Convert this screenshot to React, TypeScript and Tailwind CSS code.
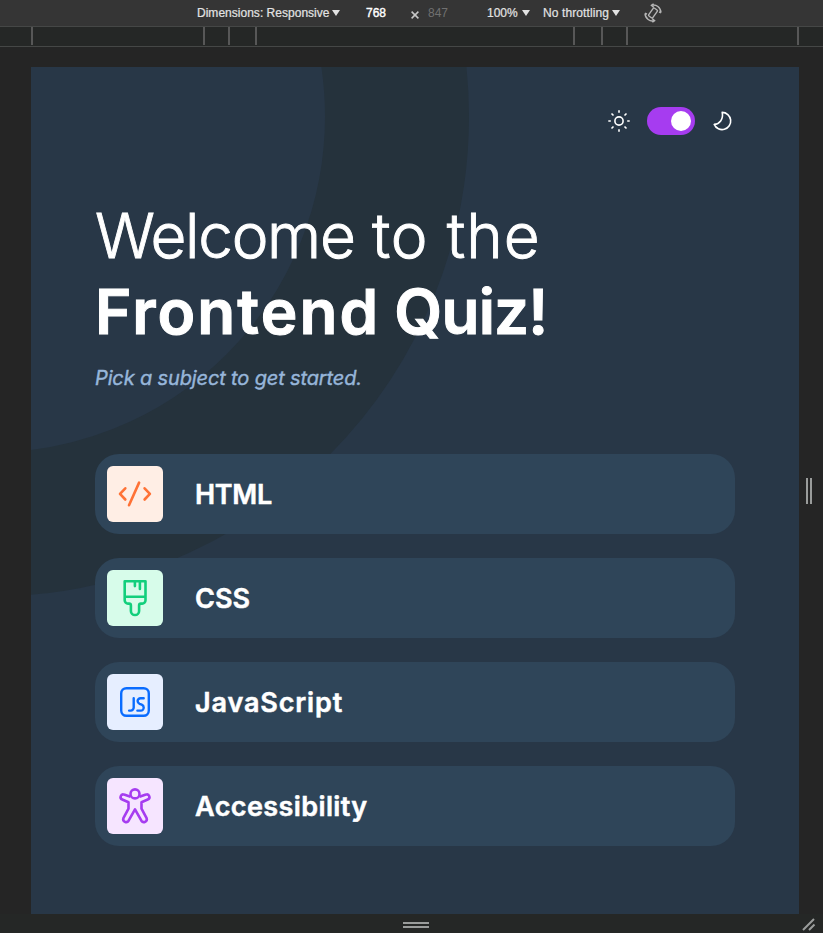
import type { ReactNode } from "react";

function Caret() {
  return (
    <svg className="ml-[3px] h-[6px] w-[8px]" viewBox="0 0 8 6">
      <path d="M0 0h8L4 6z" fill="#e3e3e3" />
    </svg>
  );
}

function RotateIcon() {
  return (
    <svg className="ml-[23px] h-[20px] w-[20px]" viewBox="0 0 20 20" fill="none" stroke="#b5b5b5" strokeWidth="1.4">
      <rect x="7.5" y="5.2" width="5" height="9.6" rx="1" transform="rotate(36 10 10)" />
      <path d="M8.6 2.4C13 .9 17.8 4.4 18 9.6M10.6 .8L8.4 2.4l2.4 2M16 8.8l2 1" />
      <path d="M11.4 17.6C7 19.1 2.2 15.6 2 10.4M9.4 19.2l2.2-1.6-2.4-2M4 11.2l-2-1" />
    </svg>
  );
}

function Toolbar() {
  return (
    <div className="flex h-[27px] items-center border-b border-[#454746] bg-[#353535] pl-[197px] text-[12px] text-[#e3e3e3] [-webkit-text-stroke:0.2px_#e3e3e3]">
      <span className="w-[132px] whitespace-nowrap tracking-[0.02px]">Dimensions: Responsive</span>
      <Caret />
      <span className="ml-[26px] w-[49px] text-white [-webkit-text-stroke:0.4px_white]">768</span>
      <svg className="mt-[3px] -ml-[4px] h-[8px] w-[8px]" viewBox="0 0 8 8" stroke="#c7c7c7" strokeWidth="1.5">
        <path d="M.6.6l6.8 6.8M7.4.6L.6 7.4" />
      </svg>
      <span className="ml-[9px] w-[59px] text-[#707070] [-webkit-text-stroke:0px]">847</span>
      <span className="w-[32px]">100%</span>
      <Caret />
      <span className="ml-[13px] w-[66px] whitespace-nowrap tracking-[0.1px]">No throttling</span>
      <Caret />
      <RotateIcon />
    </div>
  );
}

function Ruler() {
  const tick = "h-[18px] w-[2px] shrink-0 bg-[#575757]";
  return (
    <div className="flex h-[20px] border-b border-[#454746] bg-[#252726]">
      <i className={`${tick} ml-[31px]`} />
      <i className={`${tick} ml-[170px]`} />
      <i className={`${tick} ml-[23px]`} />
      <i className={`${tick} ml-[25px]`} />
      <i className={`${tick} ml-[316px]`} />
      <i className={`${tick} ml-[26px]`} />
      <i className={`${tick} ml-[23px]`} />
      <i className={`${tick} ml-[169px]`} />
    </div>
  );
}

function ThemeSwitch() {
  return (
    <div className="flex h-7 items-center justify-end">
      <svg className="h-6 w-6" viewBox="0 0 24 24" fill="none" stroke="white" strokeWidth="1.6">
        <circle cx="12" cy="12" r="4.1" />
        <path d="M12 1.3v2.5M12 20.2v2.5M1.3 12h2.5M20.2 12h2.5M4.5 4.5l2 2M17.5 17.5l2 2M4.5 19.5l2-2M17.5 6.5l2-2" />
      </svg>
      <div className="ml-4 flex h-7 w-12 items-center justify-end rounded-full bg-[#a63cf0] pr-1">
        <div className="h-5 w-5 rounded-full bg-white" />
      </div>
      <svg className="ml-4 h-6 w-6" viewBox="0 0 24 24" fill="none" stroke="white" strokeWidth="1.6" strokeLinejoin="round">
        <path d="M11.2 3.4A8.6 8.6 0 1 1 3.2 15.4C8.4 15.3 12.6 10.4 11.2 3.4Z" />
      </svg>
    </div>
  );
}

function Subject({ label, tile, children }: { label: ReactNode; tile: string; children: ReactNode }) {
  return (
    <li className="flex h-20 items-center rounded-3xl bg-[#2f4559] pl-3">
      <div className={`flex h-14 w-14 items-center justify-center rounded-md ${tile}`}>{children}</div>
      <div className="mt-[2px] ml-8 text-[27px] font-semibold text-white [-webkit-text-stroke:0.5px_white]">{label}</div>
    </li>
  );
}

export default function App() {
  return (
    <div className="flex h-[933px] w-[823px] flex-col overflow-hidden bg-[#252525] font-['Liberation_Sans',sans-serif]">
      <Toolbar />
      <Ruler />
      <div className="mt-5 flex h-[847px] items-center pl-[31px]">
        <main className="relative h-[847px] w-[768px] shrink-0 overflow-hidden bg-[#283747] px-16 pt-10 font-['Inter',sans-serif]">
          <svg className="absolute top-0 left-0 h-[847px] w-[768px]" viewBox="0 0 768 847">
            <circle cx="-42" cy="49.6" r="408" fill="none" stroke="#25323c" strokeWidth="144" />
          </svg>
          <div className="relative">
            <ThemeSwitch />
            <h1 className="mt-[63px] text-[62px] leading-[76px] whitespace-nowrap text-white">
              <span className="block font-light [-webkit-text-stroke:0.9px_white]">
                <span className="tracking-[-1.3px]">Welcome</span> <span className="tracking-[0.9px]">to the</span>
              </span>
              <span className="block font-semibold [-webkit-text-stroke:1px_white]">
                <span className="tracking-[2.1px]">Frontend</span>
                <span className="tracking-[-1.6px]"> </span>
                <span className="tracking-[-0.8px]">Quiz!</span>
              </span>
            </h1>
            <p className="mt-[13px] text-[20px] leading-[30px] tracking-[-0.14px] text-[#97b6da] italic [-webkit-text-stroke:0.4px_#97b6da]">
              Pick a subject to get started.
            </p>
            <ul className="mt-[61px] flex flex-col gap-6">
              <Subject label={<span className="tracking-[-0.3px]">HTML</span>} tile="bg-[#ffeee5]">
                <svg className="h-10 w-10" viewBox="0 0 40 40" fill="none" stroke="#ff7236" strokeWidth="2.6" strokeLinecap="round" strokeLinejoin="round">
                  <path d="M10.3 14.3L5 19.8l5.3 5.7M29.6 14.3l5.3 5.5-5.3 5.7M24.1 8.6L14 31.2" />
                </svg>
              </Subject>
              <Subject label={<span className="tracking-[0px]">CSS</span>} tile="bg-[#d7fcea]">
                <svg className="h-10 w-10" viewBox="0 0 40 40" fill="none" stroke="#12cf7c" strokeWidth="2.6" strokeLinejoin="round">
                  <path d="M9.7 3.2h20.8v19.1a3.3 3.3 0 0 1-3.3 3.3h-1.3a1.8 1.8 0 0 0-1.8 1.8v5.5a4.1 4.1 0 0 1-8.2 0v-5.5a1.8 1.8 0 0 0-1.8-1.8h-1.1a3.3 3.3 0 0 1-3.3-3.3ZM9.7 18.7h20.8M19.9 3.2v4.9M24.9 3.2v7.8" strokeLinecap="round" />
                </svg>
              </Subject>
              <Subject label={<span className="tracking-[0.85px]">JavaScript</span>} tile="bg-[#e6eeff]">
                <svg className="h-10 w-10" viewBox="0 0 40 40" fill="none" stroke="#0a6cff" strokeWidth="2.4" strokeLinecap="round" strokeLinejoin="round">
                  <rect x="6.2" y="6.2" width="27.6" height="27.6" rx="5.2" />
                  <path d="M18.7 16.2v9.4a3 3 0 0 1-3 3h-1.6M28.7 16.2h-3.2a2.9 2.9 0 0 0-2.9 2.9c0 1.5.7 2.2 2 2.8l2.1.8c1.4.6 2 1.5 2 2.9a2.9 2.9 0 0 1-2.9 3h-3.4" />
                </svg>
              </Subject>
              <Subject label={<span className="tracking-[0.4px]">Accessibility</span>} tile="bg-[#f6e5ff]">
                <svg className="h-10 w-10" viewBox="0 0 40 40" fill="none" stroke="#a63cf0" strokeWidth="2.6" strokeLinejoin="round">
                  <circle cx="20" cy="7.9" r="4.5" />
                  <path d="M15.5 10.7L9.1 8.6a2.6 2.6 0 0 0-1.8 4.9l6.2 2.7v6.5L8.4 32.2a2.9 2.9 0 0 0 5.2 2.5L20 23.3l6.4 11.4a2.9 2.9 0 0 0 5.2-2.5l-5.1-9.5v-6.5l6.2-2.7a2.6 2.6 0 0 0-1.8-4.9l-6.4 2.1" />
                </svg>
              </Subject>
            </ul>
          </div>
        </main>
        <div className="ml-[7px] flex gap-[2px]">
          <i className="h-[26px] w-[2px] bg-[#9a9c9b]" />
          <i className="h-[26px] w-[2px] bg-[#9a9c9b]" />
        </div>
      </div>
      <div className="flex h-[19px] items-start bg-[#252726] pl-[403px]">
        <div className="mt-[8px] flex w-[26px] flex-col gap-[2px]">
          <i className="h-[2px] w-[26px] bg-[#9a9c9b]" />
          <i className="h-[2px] w-[26px] bg-[#9a9c9b]" />
        </div>
        <svg className="mt-[3px] mr-[7px] ml-auto h-[14px] w-[14px]" viewBox="0 0 14 14" stroke="#9a9c9b" strokeWidth="2">
          <path d="M1 13L12 2M7 13l5.5-5.5" />
        </svg>
      </div>
    </div>
  );
}
